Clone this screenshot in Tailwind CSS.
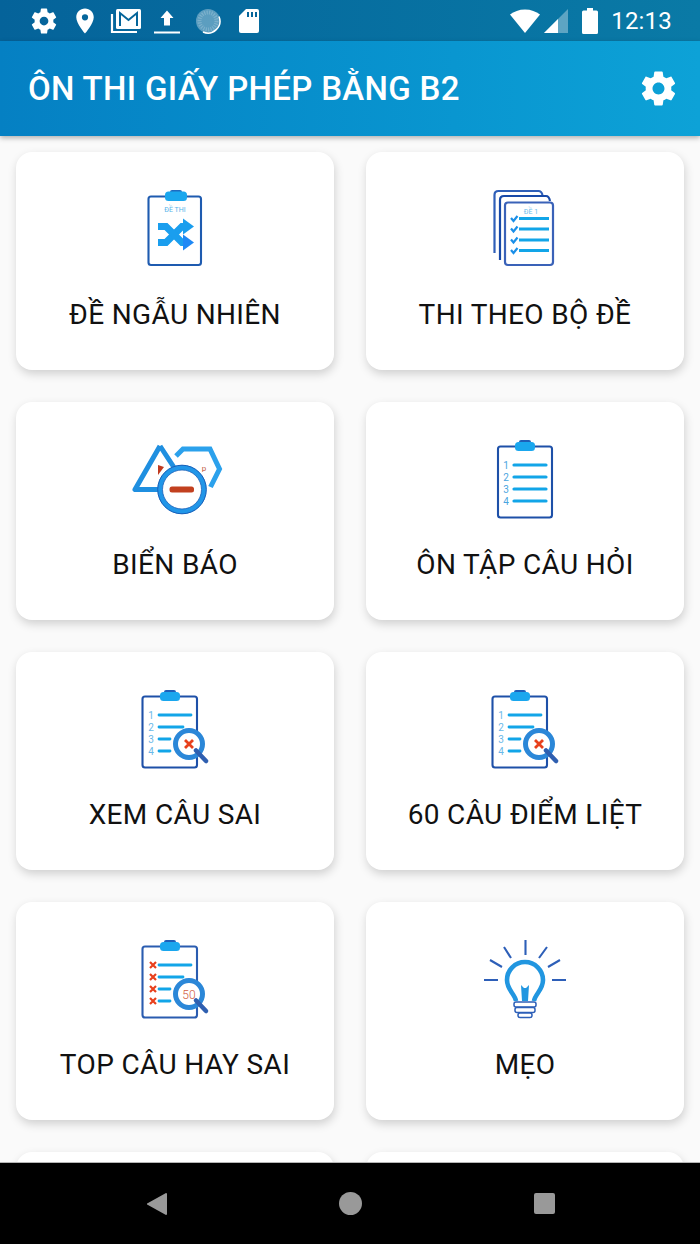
<!DOCTYPE html>
<html lang="vi">

<head>
    <meta charset="UTF-8">
    <meta name="viewport" content="width=device-width, initial-scale=1.0">
    <title>Ôn thi giấy phép bằng B2</title>
    <script src="https://cdn.jsdelivr.net/npm/@tailwindcss/browser@4"></script>
</head>

<body class="w-[700px] h-[1244px] overflow-hidden bg-[#fafafa] font-['Roboto',sans-serif]">
    <div class="flex flex-col h-[1244px]">

        <!-- status bar -->
        <div class="flex items-center h-[41px] pl-[23px] pr-[28px] bg-gradient-to-r from-[#05639a] to-[#0a7aa6] text-white shrink-0">
            <span class="w-[41px] flex justify-center">
                <svg width="30" height="30" viewBox="0 0 24 24" fill="#fff"><path d="M19.43 12.98c.04-.32.07-.64.07-.98s-.03-.66-.07-.98l2.11-1.65c.19-.15.24-.42.12-.64l-2-3.46c-.12-.22-.39-.3-.61-.22l-2.49 1c-.52-.4-1.08-.73-1.69-.98l-.38-2.65C14.46 2.18 14.25 2 14 2h-4c-.25 0-.46.18-.49.42l-.38 2.65c-.61.25-1.17.59-1.69.98l-2.49-1c-.23-.09-.49 0-.61.22l-2 3.46c-.13.22-.07.49.12.64l2.11 1.65c-.04.32-.07.65-.07.98s.03.66.07.98l-2.11 1.65c-.19.15-.24.42-.12.64l2 3.46c.12.22.39.3.61.22l2.49-1c.52.4 1.08.73 1.69.98l.38 2.65c.03.24.24.42.49.42h4c.25 0 .46-.18.49-.42l.38-2.65c.61-.25 1.17-.59 1.69-.98l2.49 1c.23.09.49 0 .61-.22l2-3.46c.12-.22.07-.49-.12-.64l-2.11-1.65zM12 15.5c-1.93 0-3.5-1.57-3.5-3.5s1.57-3.5 3.5-3.5 3.5 1.57 3.5 3.5-1.57 3.5-3.5 3.5z"/></svg>
            </span>
            <span class="w-[41px] flex justify-center">
                <svg width="30" height="30" viewBox="0 0 24 24" fill="#fff"><path d="M12 2C8.13 2 5 5.13 5 9c0 5.25 7 13 7 13s7-7.750 7-13c0-3.870-3.130-7-7-7zm0 9.500a2.500 2.500 0 0 1 0-5 2.500 2.500 0 0 1 0 5z"/></svg>
            </span>
            <span class="w-[41px] flex justify-center">
                <svg width="32" height="28" viewBox="0 0 32 28" fill="none"><path d="M2 7v18h25" stroke="#fff" stroke-width="2.200"/><rect x="6" y="2" width="25" height="20" rx="1.500" fill="#fff"/><path d="M10 19V6l8.500 7L27 6v13" stroke="#05659a" stroke-width="2"/></svg>
            </span>
            <span class="w-[41px] flex justify-center">
                <svg width="28" height="28" viewBox="0 0 28 28" fill="#fff"><path d="M11 18.500V11H7.500L14 3.500 20.500 11H17v7.500z"/><rect x="1" y="24.500" width="26" height="2"/></svg>
            </span>
            <span class="w-[41px] flex justify-center">
                <svg width="26" height="26" viewBox="0 0 26 26" fill="none"><circle cx="13" cy="13" r="12" fill="#fff" fill-opacity="0.35"/><circle cx="13" cy="13" r="8.500" stroke="#fff" stroke-opacity="0.2" stroke-width="4" stroke-dasharray="1.200 1.200"/><path d="M24 8.500A12 12 0 0 1 8 24" stroke="#fff" stroke-width="1.500"/></svg>
            </span>
            <span class="w-[41px] flex justify-center">
                <svg width="22" height="26" viewBox="0 0 22 26" fill="#fff"><path d="M8 1h11a2 2 0 0 1 2 2v20a2 2 0 0 1-2 2H3a2 2 0 0 1-2-2V8z"/><path d="M9 4h2v5H9zm4 0h2v5h-2zm4 0h2v5h-2z" fill="#05659a"/></svg>
            </span>
            <div class="ml-auto flex items-center">
                <svg width="30" height="24" viewBox="0 0 30 24" fill="#fff"><path d="M0 5.500C4 2.500 9 .500 15 .500s11 2 15 5L15 24z"/></svg>
                <svg class="ml-[4px]" width="24" height="24" viewBox="0 0 24 24"><path d="M0 24 24 0v24z" fill="#fff" fill-opacity="0.35"/><path d="M0 24 14 10v14z" fill="#fff"/></svg>
                <svg class="ml-[14px]" width="16" height="26" viewBox="0 0 16 26" fill="#fff"><path d="M5 0h6v2.500h3.500a1.500 1.500 0 0 1 1.500 1.500v20.500a1.500 1.500 0 0 1-1.500 1.500h-13A1.500 1.500 0 0 1 0 24.500V4a1.500 1.500 0 0 1 1.500-1.500H5z"/></svg>
                <span class="ml-[13px] text-[24px] leading-[32px] tracking-[0.2px]">12:13</span>
            </div>
        </div>

        <!-- app bar -->
        <div class="relative z-10 flex items-center justify-between h-[95px] pl-[28px] pr-[21px] bg-gradient-to-r from-[#0580c3] to-[#0da2d7] shadow-[0_2px_5px_rgba(0,0,0,0.3)] shrink-0">
            <h1 class="text-white text-[33px] font-medium leading-[40px] tracking-[0.33px]">ÔN THI GIẤY PHÉP BẰNG B2</h1>
            <svg width="41" height="41" viewBox="0 0 24 24" fill="#fff"><path d="M19.43 12.98c.04-.32.07-.64.07-.98s-.03-.66-.07-.98l2.11-1.65c.19-.15.24-.42.12-.64l-2-3.46c-.12-.22-.39-.3-.61-.22l-2.49 1c-.52-.4-1.08-.73-1.69-.98l-.38-2.65C14.46 2.18 14.25 2 14 2h-4c-.25 0-.46.18-.49.42l-.38 2.65c-.61.25-1.17.59-1.69.98l-2.49-1c-.23-.09-.49 0-.61.22l-2 3.46c-.13.22-.07.49.12.64l2.11 1.65c-.04.32-.07.65-.07.98s.03.66.07.98l-2.11 1.65c-.19.15-.24.42-.12.64l2 3.46c.12.22.39.3.61.22l2.49-1c.52.4 1.08.73 1.69.98l.38 2.65c.03.24.24.42.49.42h4c.25 0 .46-.18.49-.42l.38-2.65c.61-.25 1.17-.59 1.69-.98l2.49 1c.23.09.49 0 .61-.22l2-3.46c.12-.22.07-.49-.12-.64l-2.11-1.65zM12 15.500c-1.930 0-3.500-1.570-3.500-3.500s1.570-3.500 3.500-3.500 3.500 1.570 3.500 3.500-1.570 3.500-3.500 3.500z"/></svg>
        </div>

        <!-- menu -->
        <div class="flex-1 overflow-hidden pt-[16px] px-[16px]">
            <div class="grid grid-cols-2 gap-x-[32px] gap-y-[32px] auto-rows-[218px]">

                <div class="flex flex-col items-center pt-[28px] bg-white rounded-[16px] shadow-[1px_4px_10px_rgba(0,0,0,0.17)]">
                    <svg width="110" height="95" viewBox="0 0 110 95" fill="none">
                        <rect x="28.500" y="16.500" width="52.500" height="68.500" rx="2.500" fill="#fff" stroke="#1e5bb0" stroke-width="2.100"/>
                        <rect x="50" y="10" width="12" height="5" rx="2" fill="#1f6bc0"/>
                        <rect x="45" y="11.500" width="22" height="9.500" rx="3.500" fill="#1aa7ee"/>
                        <text x="55" y="32" text-anchor="middle" font-size="7" font-family="Roboto" fill="#58b4ea">ĐỀ THI</text>
                        <path d="M38 62.500h8l16-16h3" stroke="#1a9eee" stroke-width="7"/>
                        <path d="M38 46.500h8l16 16h3" stroke="#1a9eee" stroke-width="7"/>
                        <path d="M63 38.500l11 8-11 8z" fill="#1a9eee"/>
                        <path d="M63 54.500l11 8-11 8z" fill="#1e88f5"/>
                    </svg>
                    <p class="mt-[24px] text-[28px] leading-[32px] tracking-[0.35px] text-[#111]">ĐỀ NGẪU NHIÊN</p>
                </div>

                <div class="flex flex-col items-center pt-[28px] bg-white rounded-[16px] shadow-[1px_4px_10px_rgba(0,0,0,0.17)]">
                    <svg width="100" height="95" viewBox="0 0 100 95" fill="none">
                        <path d="M19.500 73V15q0-4 4-4h40q3 0 4 4" stroke="#2f5fb8" stroke-width="2.200"/>
                        <path d="M25 80V20q0-4 4-4h42q3 0 4 5" stroke="#1849a8" stroke-width="2.200"/>
                        <rect x="30" y="22.500" width="48" height="62.500" rx="3" fill="#fff" stroke="#3a62b8" stroke-width="2.200"/>
                        <text x="56" y="33.500" text-anchor="middle" font-size="7" font-family="Roboto" fill="#6bbcec">ĐỀ 1</text>
                        <path d="M44 38.500h30M44 49h30M44 60h30M44 70.500h30" stroke="#12a5e8" stroke-width="2.800"/>
                        <path d="M36 38l2.500 3 4-5M36 48.500l2.500 3 4-5M36 59.500l2.500 3 4-5M36 70l2.500 3 4-5" stroke="#1a8fe8" stroke-width="2.200"/>
                    </svg>
                    <p class="mt-[24px] text-[28px] leading-[32px] tracking-[0.35px] text-[#111]">THI THEO BỘ ĐỀ</p>
                </div>

                <div class="flex flex-col items-center pt-[28px] bg-white rounded-[16px] shadow-[1px_4px_10px_rgba(0,0,0,0.17)]">
                    <svg width="110" height="95" viewBox="0 0 110 95" fill="none">
                        <path d="M40 16 15 59.500h25M40 16l17 26" stroke="#1f8fe0" stroke-width="5" stroke-linejoin="round"/>
                        <path d="M56 26l7-7h27l9.500 20-9 18" stroke="#2ba1ec" stroke-width="5"/>
                        <path d="M38 35l6 2-6 8z" fill="#c0391e"/>
                        <text x="84" y="41" text-anchor="middle" font-size="8" font-family="Roboto" fill="#c0583e">p</text>
                        <circle cx="62" cy="59.500" r="22" fill="#fff" stroke="#2196e8" stroke-width="5"/>
                        <circle cx="62" cy="59.500" r="24.300" stroke="#1a5fb8" stroke-width="1"/>
                        <circle cx="62" cy="59.500" r="19.500" stroke="#1a5fb8" stroke-width="0.800"/>
                        <rect x="49.500" y="56.500" width="24.500" height="6" rx="2.500" fill="#c2401f"/>
                    </svg>
                    <p class="mt-[24px] text-[28px] leading-[32px] tracking-[0.35px] text-[#111]">BIỂN BÁO</p>
                </div>

                <div class="flex flex-col items-center pt-[28px] bg-white rounded-[16px] shadow-[1px_4px_10px_rgba(0,0,0,0.17)]">
                    <svg width="100" height="95" viewBox="0 0 100 95" fill="none">
                        <rect x="23" y="16.500" width="54" height="71" rx="2.500" fill="#fff" stroke="#1e50a8" stroke-width="2.100"/>
                        <rect x="44" y="10" width="12" height="5" rx="2" fill="#1f5fb8"/>
                        <rect x="40" y="12" width="20" height="9" rx="3.500" fill="#1aa7ee"/>
                        <g font-size="10" font-family="Roboto" fill="#4aa5e0" text-anchor="middle">
                            <text x="31" y="39">1</text><text x="31" y="51">2</text><text x="31" y="63">3</text><text x="31" y="75">4</text>
                        </g>
                        <path d="M39 35h32M39 47h32M39 59h32M39 71h32" stroke="#12a5e8" stroke-width="3.200" stroke-linecap="round"/>
                    </svg>
                    <p class="mt-[24px] text-[28px] leading-[32px] tracking-[0.35px] text-[#111]">ÔN TẬP CÂU HỎI</p>
                </div>

                <div class="flex flex-col items-center pt-[28px] bg-white rounded-[16px] shadow-[1px_4px_10px_rgba(0,0,0,0.17)]">
                    <svg width="100" height="95" viewBox="0 0 100 95" fill="none">
                        <rect x="17.500" y="16.500" width="54.500" height="71" rx="2.500" fill="#fff" stroke="#1e50a8" stroke-width="2.100"/>
                        <rect x="39" y="10" width="12" height="5" rx="2" fill="#1f5fb8"/>
                        <rect x="35" y="12" width="20" height="9" rx="3.500" fill="#1aa7ee"/>
                        <g font-size="10" font-family="Roboto" fill="#6ab8e8" text-anchor="middle">
                            <text x="26" y="39">1</text><text x="26" y="51">2</text><text x="26" y="63">3</text><text x="26" y="75">4</text>
                        </g>
                        <path d="M34 35h32M34 47h24M34 59h11M34 71h11" stroke="#12a5e8" stroke-width="2.800" stroke-linecap="round"/>
                        <circle cx="64" cy="64" r="13.500" fill="#fff" stroke="#2b87d8" stroke-width="5"/>
                        <path d="M71 70.500 81 81" stroke="#2f5fb0" stroke-width="4.500" stroke-linecap="round"/>
                        <path d="M60 60l8 8M68 60l-8 8" stroke="#e8401c" stroke-width="2.800"/>
                    </svg>
                    <p class="mt-[24px] text-[28px] leading-[32px] tracking-[0.35px] text-[#111]">XEM CÂU SAI</p>
                </div>

                <div class="flex flex-col items-center pt-[28px] bg-white rounded-[16px] shadow-[1px_4px_10px_rgba(0,0,0,0.17)]">
                    <svg width="100" height="95" viewBox="0 0 100 95" fill="none">
                        <rect x="17.500" y="16.500" width="54.500" height="71" rx="2.500" fill="#fff" stroke="#1e50a8" stroke-width="2.100"/>
                        <rect x="39" y="10" width="12" height="5" rx="2" fill="#1f5fb8"/>
                        <rect x="35" y="12" width="20" height="9" rx="3.500" fill="#1aa7ee"/>
                        <g font-size="10" font-family="Roboto" fill="#6ab8e8" text-anchor="middle">
                            <text x="26" y="39">1</text><text x="26" y="51">2</text><text x="26" y="63">3</text><text x="26" y="75">4</text>
                        </g>
                        <path d="M34 35h32M34 47h24M34 59h11M34 71h11" stroke="#12a5e8" stroke-width="2.800" stroke-linecap="round"/>
                        <circle cx="64" cy="64" r="13.500" fill="#fff" stroke="#2b87d8" stroke-width="5"/>
                        <path d="M71 70.500 81 81" stroke="#2f5fb0" stroke-width="4.500" stroke-linecap="round"/>
                        <path d="M60 60l8 8M68 60l-8 8" stroke="#e8401c" stroke-width="2.800"/>
                    </svg>
                    <p class="mt-[24px] text-[28px] leading-[32px] tracking-[0.35px] text-[#111]">60 CÂU ĐIỂM LIỆT</p>
                </div>

                <div class="flex flex-col items-center pt-[28px] bg-white rounded-[16px] shadow-[1px_4px_10px_rgba(0,0,0,0.17)]">
                    <svg width="100" height="95" viewBox="0 0 100 95" fill="none">
                        <rect x="17.500" y="16.500" width="54.500" height="71" rx="2.500" fill="#fff" stroke="#2a5cb0" stroke-width="2.100"/>
                        <rect x="39" y="10" width="12" height="5" rx="2" fill="#1f5fb8"/>
                        <rect x="35" y="12" width="20" height="9" rx="3.500" fill="#1aa7ee"/>
                        <path d="M25 32l6 6M31 32l-6 6M25 44l6 6M31 44l-6 6M25 56l6 6M31 56l-6 6M25 68l6 6M31 68l-6 6" stroke="#e8401c" stroke-width="2.200"/>
                        <path d="M34 35h32M34 47h24M34 59h11M34 71h11" stroke="#12a5e8" stroke-width="2.800" stroke-linecap="round"/>
                        <circle cx="64" cy="64" r="13.500" fill="#fff" stroke="#2b87d8" stroke-width="5"/>
                        <path d="M71 70.500 81 81" stroke="#2f5fb0" stroke-width="4.500" stroke-linecap="round"/>
                        <text x="64" y="69" text-anchor="middle" font-size="12" font-family="Roboto" font-weight="300" fill="#d05a40">50</text>
                    </svg>
                    <p class="mt-[24px] text-[28px] leading-[32px] tracking-[0.35px] text-[#111]">TOP CÂU HAY SAI</p>
                </div>

                <div class="flex flex-col items-center pt-[28px] bg-white rounded-[16px] shadow-[1px_4px_10px_rgba(0,0,0,0.17)]">
                    <svg width="100" height="95" viewBox="0 0 100 95" fill="none">
                        <path d="M50.500 10v15M29 17l7 11M72 17l-8 11M15 30l12 7M85 30l-12 7M9 50h14M77 50h14" stroke="#2d5fb8" stroke-width="2.100"/>
                        <path d="M41 71C40 64 32 60 32 50a18 18 0 0 1 36 0C68 60 60 64 59 71" fill="#fff" stroke="#2196e0" stroke-width="4.600"/>
                        <path d="M46 55l3 3h2l3-3-1 16h-6z" fill="#2196e0"/>
                        <rect x="39" y="72" width="22" height="5" rx="2" fill="#fff" stroke="#2d5fb8" stroke-width="1.500"/>
                        <rect x="40" y="77.500" width="20" height="5" rx="2" fill="#fff" stroke="#2d5fb8" stroke-width="1.500"/>
                        <rect x="43" y="83" width="14" height="4.500" rx="2" fill="#fff" stroke="#2d5fb8" stroke-width="1.500"/>
                    </svg>
                    <p class="mt-[24px] text-[28px] leading-[32px] tracking-[0.35px] text-[#111]">MẸO</p>
                </div>

                <div class="bg-white rounded-[16px] shadow-[1px_4px_10px_rgba(0,0,0,0.17)]"></div>
                <div class="bg-white rounded-[16px] shadow-[1px_4px_10px_rgba(0,0,0,0.17)]"></div>
            </div>
        </div>

        <!-- nav bar -->
        <div class="flex items-center justify-center h-[82px] bg-black border-t border-[#b5b5b5] shrink-0">
            <svg width="22" height="24" viewBox="0 0 22 24" fill="#999"><path d="M20 1a1 1 0 0 1 1 1v20a1 1 0 0 1-1 1L2 13a1 1 0 0 1 0-2z"/></svg>
            <span class="ml-[171px] w-[23px] h-[23px] rounded-full bg-[#999]"></span>
            <span class="ml-[172px] w-[21px] h-[21px] rounded-[2px] bg-[#999]"></span>
        </div>
    </div>
</body>

</html>
